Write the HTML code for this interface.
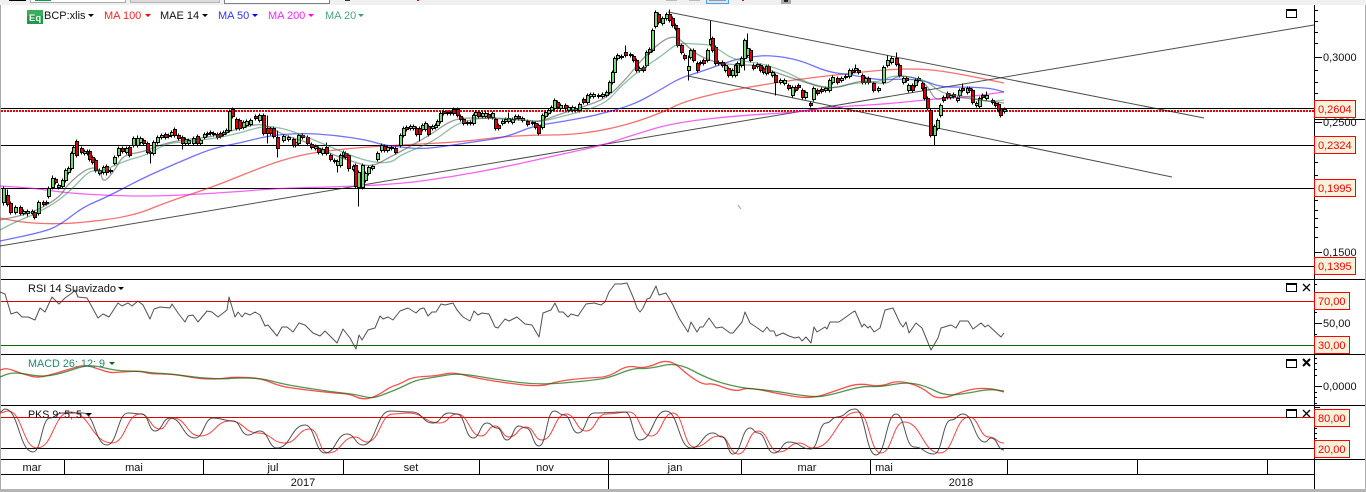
<!DOCTYPE html>
<html><head><meta charset="utf-8"><title>BCP:xlis</title>
<style>
html,body{margin:0;padding:0;background:#fff;width:1366px;height:492px;overflow:hidden}
svg{display:block;font-family:"Liberation Sans",Arial,sans-serif;font-size:11px}
.l{fill:none;stroke-width:1;stroke-linejoin:round}
.m{fill:none;stroke-width:1.3;stroke-linejoin:round}
.k{stroke:#000;stroke-width:1;shape-rendering:crispEdges;fill:none}
.b{fill:#f6f3dd;stroke:#f00;stroke-width:1;shape-rendering:crispEdges}
.r{fill:#f00}
.t{fill:#111}
</style></head><body>
<svg width="1366" height="492" viewBox="0 0 1366 492" xmlns="http://www.w3.org/2000/svg">
<rect width="1366" height="492" fill="#fff"/>
<!-- top strip -->
<rect width="1366" height="5" fill="#f0f0f0"/>
<rect x="9" width="17" height="1" fill="#000"/>
<rect x="30" width="96" height="3" fill="#aaa"/><rect x="31" width="94" height="2" fill="#fff"/><rect x="35" width="16" height="1" fill="#0a9a50"/>
<rect x="130" width="90" height="3" fill="#b5b5b5"/><rect x="131" width="88" height="2" fill="#dcdcdc"/>
<rect x="224" width="106" height="4" fill="#808080"/><rect x="225" width="104" height="3" fill="#fff"/>
<rect x="345" width="5" height="1" fill="#333"/><rect x="417" width="2" height="1" fill="#d00"/>
<rect x="666" width="11" height="1" fill="#bbb"/><rect x="689" width="11" height="1" fill="#bbb"/>
<rect x="706" width="23" height="4" fill="#4aa3f5"/><rect x="707" width="21" height="3" fill="#d8e6f2"/><rect x="709" width="17" height="1" fill="#999"/>
<rect x="742" width="2" height="1" fill="#a22"/><rect x="781" width="10" height="4" fill="#aaa"/><rect x="784" width="4" height="2" fill="#222"/>
<!-- frame -->
<rect x="0" y="5" width="1" height="484" fill="#a8a8a8"/>
<rect x="1365" y="5" width="1" height="487" fill="#b0b0b0"/>
<rect x="0" y="489" width="1366" height="3" fill="#b4b4b4"/>
<!-- horizontal levels -->
<path class="k" d="M1 108.5H1314M1 145.5H1314M1 188.5H1314M1 266.5H1314M1 279.5H1365M1 354.5H1365M1 405.5H1365M1 459.5H1365M1 474.5H1314M1 448.5H1314M1314 119.5H1365"/>
<path d="M1 111H1314" stroke="#e80000" stroke-width="2" stroke-dasharray="2 1" fill="none" shape-rendering="crispEdges"/>
<path d="M1 301.5H1314M1 417.5H1314" stroke="#e00000" fill="none" shape-rendering="crispEdges"/>
<path d="M1 345.5H1314" stroke="#0a6a0a" fill="none" shape-rendering="crispEdges"/>
<!-- axis -->
<path class="k" d="M1314.5 5V489M64.5 459V474M203.5 459V474M343.5 459V474M479.5 459V474M608.5 459V489M741.5 459V474M870.5 459V474M1007.5 459V474M1137.5 459V474M1267.5 459V474"/>
<path class="k" d="M1314 10.5h4M1314 21.5h4M1314 32.5h4M1314 43.5h4M1314 57.5h8M1314 70.5h4M1314 82.5h4M1314 93.5h4M1314 122.5h8M1314 136.5h4M1314 162.5h4M1314 175.5h4M1314 200.5h4M1314 210.5h4M1314 218.5h4M1314 227.5h4M1314 237.5h4M1314 252.5h8M1314 284.5h3M1314 293.5h3M1314 312.5h3M1314 323.5h8M1314 334.5h3M1314 358.5h3M1314 363.5h3M1314 369.5h3M1314 375.5h3M1314 386.5h8M1314 392.5h3M1314 397.5h3M1314 403.5h3M1314 407.5h6M1314 428.5h3M1314 433.5h3M1314 438.5h3"/>
<!-- trend lines -->
<g class="l" stroke="#222" stroke-opacity=".8">
<path d="M0 246L1314 25"/><path d="M668 12L1204 118"/><path d="M688 76L1172 177"/>
</g>
<path d="M738 205l3 4" stroke="#999" fill="none"/>
<!-- moving averages -->
<path class="m" stroke="#f01818" stroke-opacity=".62" d="M0 218L10 220Q20 222 33.5 223Q47 224 63.5 223.5Q80 223 106.5 219.5Q133 216 150 209Q167 202 190 194.5Q213 187 240 176Q267 165 283.5 160Q300 155 316.5 152.5Q333 150 350 148.5Q367 147 383.5 146Q400 145 430 143.5Q460 142 480 139.5Q500 137 516.5 136Q533 135 550 135Q567 135 583.5 133Q600 131 616.5 127Q633 123 648 117.5Q663 112 673 107Q683 102 700 97.5Q717 93 733.5 90Q750 87 765 84.5Q780 82 798.5 79.5Q817 77 835 75Q853 73 873 71Q893 69 910 69Q927 69 943.5 71.5Q960 74 982 78.5L1004 83"/>
<path class="m" stroke="#f010f0" stroke-opacity=".65" d="M0 186L16.5 187Q33 188 50 190.5Q67 193 92 194.5Q117 196 142 196Q167 196 200 194Q233 192 258 190Q283 188 308 187.5Q333 187 366.5 185.5Q400 184 425 180.5Q450 177 475 172.5Q500 168 533.5 160.5Q567 153 583.5 149.5Q600 146 616.5 140.5Q633 135 653 129Q673 123 703 119.5Q733 116 766.5 114Q800 112 816.5 109.5Q833 107 860 105.5Q887 104 910 101.5Q933 99 950 98Q967 97 985.5 94.5L1004 92"/>
<path class="m" stroke="#1a1aff" stroke-opacity=".62" d="M0 241L21.5 236.5Q43 232 51.5 228.5Q60 225 71.5 216Q83 207 95 202Q107 197 125 187.5Q143 178 160 170.5Q177 163 195 155.5Q213 148 226.5 145.5Q240 143 253.5 139.5Q267 136 283.5 134.5Q300 133 316.5 134Q333 135 350 137.5Q367 140 375 142.5Q383 145 391.5 146Q400 147 410 148Q420 149 430 148Q440 147 456.5 144.5Q473 142 490 139.5Q507 137 520 131.5Q533 126 546.5 124Q560 122 573.5 119.5Q587 117 593.5 115.5Q600 114 616.5 109.5Q633 105 646.5 97.5Q660 90 670 84Q680 78 690 75Q700 72 716.5 66Q733 60 741.5 58.5Q750 57 760 56Q770 55 785 57.5Q800 60 813.5 66Q827 72 840 73.5Q853 75 865 77.5Q877 80 888.5 79.5Q900 79 911.5 79.5Q923 80 931.5 83.5Q940 87 951.5 87Q963 87 976.5 87.5Q990 88 997 90L1004 92"/>
<!-- candles -->
<g transform="translate(.5 .5)" shape-rendering="crispEdges">
<path stroke="#000" fill="none" d="M3 186V205M7 189V206M10 201V214M15 205V214M20 205V215M23 209V215M27 209V216M32 209V215M34 210V219M38 200V215M43 200V206M46 200V205M48 186V198M52 175V189M55 177V184M58 183V189M62 178V188M65 168V182M68 166V174M71 151V170M73 145V155M76 139V157M81 146V154M84 149V155M87 149V155M89 149V161M92 155V164M95 158V172M99 168V175M103 165V174M106 164V175M110 168V173M114 155V165M118 146V157M122 146V153M126 146V154M129 145V157M133 136V147M137 135V147M140 136V144M143 138V145M147 141V154M150 150V163M153 140V155M157 135V144M161 133V139M165 132V139M168 133V138M171 130V137M174 127V137M178 133V140M182 135V149M185 137V145M188 138V145M193 136V145M197 134V145M200 138V145M204 132V139M207 131V136M210 130V135M213 131V136M217 132V139M220 131V138M223 130V136M226 128V134M229 109V132M232 107V118M236 117V130M239 118V130M243 120V129M246 119V127M250 118V126M255 114V120M259 113V122M263 113V135M267 115V143M270 126V135M273 126V138M277 130V157M283 134V142M288 135V141M293 137V147M295 140V147M298 133V145M302 133V139M307 135V145M311 142V149M315 144V150M318 146V154M322 147V155M326 142V155M330 153V161M334 158V163M337 159V172M340 153V167M343 150V157M345 151V159M348 153V171M353 164V171M355 163V188M358 170V206M362 163V189M365 171V182M368 165V175M372 164V170M377 151V161M381 143V152M384 144V152M387 145V152M391 145V150M395 146V154M400 133V147M403 126V137M406 125V131M410 124V130M413 124V130M416 126V136M419 126V141M422 123V131M425 121V131M428 124V136M432 124V130M435 123V129M437 119V127M440 111V123M443 109V115M447 110V115M450 110V115M453 107V115M457 107V117M460 114V121M463 117V125M467 120V125M470 120V125M473 113V125M475 110V117M478 110V118M482 111V118M485 111V118M488 112V119M492 111V119M495 117V130M498 123V130M502 119V125M505 117V123M508 112V123M512 117V124M515 114V120M518 114V120M522 116V122M527 119V126M532 120V125M535 121V129M538 123V135M542 113V129M545 110V118M548 108V115M551 105V112M554 98V110M557 100V109M560 103V110M565 103V110M568 105V112M572 105V112M575 106V112M579 102V112M583 97V104M587 93V104M590 92V98M593 92V98M598 93V98M602 92V98M606 90V97M609 80V94M612 70V84M614 56V74M617 53V60M621 54V59M625 45V57M630 52V57M633 54V62M636 58V72M639 66V72M643 65V72M646 50V67M649 47V54M652 28V52M655 10V28M658 12V24M662 16V25M666 12V20M669 9V22M672 16V27M675 23V30M677 26V47M681 43V54M684 53V60M688 55V80M690 48V59M693 48V62M697 61V72M700 60V65M703 58V65M707 48V62M710 20V46M712 36V52M715 45V65M718 60V65M722 60V67M725 63V72M728 66V77M732 68V77M735 63V77M737 61V74M741 56V67M744 38V70M747 33V57M750 48V62M753 63V70M757 62V68M760 63V72M763 66V74M766 64V75M768 64V74M772 70V77M775 73V95M780 78V84M784 78V85M788 83V90M792 85V97M795 85V92M798 83V89M802 88V99M805 90V99M810 101V107M813 86V101M817 88V95M821 87V93M825 86V92M829 78V92M832 75V84M837 76V84M841 76V82M845 74V79M849 68V78M852 68V74M855 64V72M858 68V74M862 73V84M865 76V84M868 76V84M873 81V92M878 86V92M883 65V84M887 55V67M891 56V64M896 52V66M899 63V77M903 76V84M906 76V82M908 83V92M912 83V92M915 78V87M918 76V82M922 81V90M924 85V100M927 96V110M930 108V137M934 124V145M937 118V130M940 103V117M943 95V102M947 91V99M950 93V99M953 92V98M957 96V102M959 88V97M962 83V92M967 86V94M969 86V92M972 88V104M976 101V107M979 96V108M982 93V99M986 91V100M992 98V104M995 101V107M998 102V112M1000 106V117M1004 107V113"/>
<path stroke="#000" fill="#6fdc6f" d="M2 188h3v14h-3zM14 207h3v5h-3zM22 211h3v2h-3zM26 211h3v2h-3zM31 211h3v2h-3zM37 202h3v11h-3zM45 202h3v1h-3zM47 188h3v8h-3zM51 178h3v9h-3zM57 185h3v2h-3zM61 180h3v6h-3zM64 170h3v10h-3zM67 168h3v4h-3zM70 153h3v15h-3zM72 147h3v6h-3zM83 151h3v2h-3zM98 170h3v3h-3zM102 167h3v5h-3zM109 170h3v1h-3zM113 157h3v6h-3zM117 148h3v7h-3zM125 148h3v4h-3zM132 138h3v7h-3zM136 138h3v7h-3zM139 138h3v4h-3zM149 152h3v1h-3zM152 142h3v11h-3zM156 137h3v5h-3zM160 135h3v2h-3zM167 135h3v1h-3zM170 132h3v3h-3zM184 139h3v4h-3zM187 140h3v3h-3zM192 138h3v5h-3zM199 140h3v3h-3zM203 134h3v3h-3zM206 133h3v1h-3zM209 132h3v1h-3zM212 133h3v1h-3zM222 132h3v2h-3zM225 130h3v2h-3zM228 111h3v19h-3zM242 122h3v5h-3zM245 121h3v4h-3zM249 120h3v4h-3zM258 115h3v5h-3zM282 136h3v4h-3zM287 137h3v2h-3zM294 142h3v3h-3zM297 135h3v8h-3zM314 146h3v2h-3zM321 149h3v4h-3zM333 160h3v1h-3zM336 161h3v4h-3zM339 155h3v10h-3zM342 152h3v3h-3zM352 166h3v3h-3zM357 172h3v15h-3zM361 165h3v22h-3zM364 173h3v7h-3zM367 167h3v6h-3zM371 166h3v2h-3zM376 153h3v6h-3zM380 145h3v5h-3zM386 147h3v3h-3zM390 147h3v1h-3zM399 135h3v10h-3zM402 128h3v7h-3zM409 126h3v2h-3zM412 126h3v2h-3zM421 125h3v4h-3zM424 123h3v6h-3zM431 126h3v2h-3zM434 125h3v2h-3zM436 121h3v4h-3zM439 113h3v8h-3zM446 112h3v1h-3zM449 112h3v1h-3zM466 122h3v1h-3zM469 122h3v1h-3zM472 115h3v8h-3zM474 112h3v3h-3zM481 113h3v3h-3zM484 113h3v3h-3zM491 113h3v4h-3zM501 121h3v2h-3zM504 119h3v2h-3zM507 118h3v3h-3zM511 119h3v3h-3zM514 116h3v2h-3zM521 118h3v2h-3zM531 122h3v1h-3zM541 115h3v12h-3zM544 112h3v4h-3zM547 110h3v3h-3zM550 107h3v3h-3zM553 100h3v8h-3zM559 105h3v3h-3zM567 107h3v3h-3zM571 107h3v3h-3zM574 108h3v2h-3zM578 104h3v6h-3zM586 95h3v7h-3zM589 94h3v2h-3zM592 94h3v2h-3zM597 95h3v1h-3zM601 94h3v2h-3zM605 92h3v3h-3zM608 82h3v10h-3zM611 72h3v10h-3zM613 58h3v14h-3zM616 55h3v3h-3zM620 56h3v1h-3zM629 54h3v1h-3zM638 68h3v2h-3zM645 52h3v13h-3zM648 49h3v3h-3zM651 30h3v20h-3zM654 12h3v14h-3zM661 18h3v5h-3zM665 14h3v4h-3zM687 66h3v4h-3zM689 50h3v7h-3zM699 62h3v1h-3zM706 50h3v10h-3zM709 39h3v5h-3zM717 62h3v1h-3zM724 65h3v5h-3zM731 70h3v5h-3zM734 65h3v10h-3zM736 63h3v9h-3zM740 58h3v7h-3zM743 40h3v18h-3zM746 48h3v7h-3zM756 64h3v2h-3zM765 66h3v7h-3zM771 72h3v3h-3zM779 80h3v2h-3zM783 80h3v3h-3zM791 87h3v8h-3zM804 92h3v5h-3zM812 88h3v11h-3zM824 88h3v2h-3zM828 80h3v10h-3zM831 77h3v5h-3zM840 78h3v2h-3zM844 76h3v1h-3zM848 70h3v6h-3zM854 68h3v2h-3zM864 78h3v4h-3zM877 88h3v2h-3zM882 67h3v15h-3zM886 60h3v5h-3zM890 58h3v4h-3zM902 78h3v4h-3zM907 85h3v5h-3zM914 80h3v5h-3zM917 78h3v2h-3zM933 126h3v9h-3zM936 120h3v8h-3zM939 105h3v10h-3zM949 95h3v2h-3zM956 98h3v2h-3zM958 90h3v5h-3zM966 88h3v4h-3zM975 103h3v2h-3zM978 98h3v8h-3zM985 95h3v3h-3zM1003 109h3v2h-3z"/>
<path stroke="#000" fill="#e80000" d="M6 195h3v9h-3zM9 203h3v9h-3zM19 207h3v6h-3zM33 212h3v5h-3zM42 202h3v2h-3zM54 179h3v3h-3zM75 141h3v14h-3zM80 148h3v4h-3zM86 151h3v2h-3zM88 151h3v8h-3zM91 157h3v5h-3zM94 160h3v10h-3zM105 166h3v6h-3zM121 148h3v3h-3zM128 147h3v8h-3zM142 140h3v3h-3zM146 143h3v9h-3zM164 134h3v3h-3zM173 129h3v6h-3zM177 135h3v3h-3zM181 137h3v6h-3zM196 136h3v7h-3zM216 134h3v3h-3zM219 133h3v3h-3zM231 109h3v7h-3zM235 119h3v9h-3zM238 120h3v8h-3zM254 116h3v2h-3zM262 115h3v18h-3zM266 128h3v5h-3zM269 128h3v5h-3zM272 128h3v8h-3zM276 137h3v11h-3zM292 139h3v6h-3zM301 135h3v2h-3zM306 137h3v6h-3zM310 144h3v3h-3zM317 148h3v4h-3zM325 147h3v6h-3zM329 155h3v4h-3zM344 153h3v4h-3zM347 155h3v13h-3zM354 165h3v21h-3zM383 146h3v4h-3zM394 148h3v4h-3zM405 127h3v2h-3zM415 128h3v6h-3zM418 128h3v6h-3zM427 126h3v8h-3zM442 111h3v2h-3zM452 109h3v4h-3zM456 109h3v6h-3zM459 116h3v3h-3zM462 119h3v4h-3zM477 112h3v4h-3zM487 114h3v3h-3zM494 119h3v9h-3zM497 125h3v3h-3zM517 116h3v2h-3zM526 121h3v3h-3zM534 123h3v4h-3zM537 125h3v8h-3zM556 102h3v5h-3zM564 105h3v3h-3zM582 99h3v3h-3zM624 52h3v3h-3zM632 56h3v4h-3zM635 60h3v10h-3zM642 67h3v3h-3zM657 14h3v8h-3zM668 14h3v6h-3zM671 18h3v7h-3zM674 25h3v3h-3zM676 28h3v17h-3zM680 45h3v7h-3zM683 55h3v3h-3zM692 50h3v10h-3zM696 63h3v7h-3zM702 60h3v3h-3zM711 38h3v12h-3zM714 47h3v16h-3zM721 62h3v3h-3zM727 68h3v7h-3zM749 50h3v10h-3zM752 65h3v3h-3zM759 65h3v5h-3zM762 68h3v4h-3zM767 66h3v6h-3zM774 75h3v7h-3zM787 85h3v3h-3zM794 87h3v3h-3zM797 85h3v2h-3zM801 90h3v7h-3zM809 103h3v2h-3zM816 90h3v3h-3zM820 89h3v2h-3zM836 78h3v4h-3zM851 70h3v2h-3zM857 70h3v2h-3zM861 75h3v7h-3zM867 78h3v4h-3zM872 83h3v7h-3zM895 58h3v6h-3zM898 65h3v10h-3zM905 78h3v2h-3zM911 85h3v5h-3zM921 83h3v5h-3zM923 87h3v11h-3zM926 98h3v10h-3zM929 110h3v25h-3zM942 97h3v3h-3zM946 93h3v4h-3zM952 94h3v2h-3zM961 88h3v2h-3zM968 88h3v2h-3zM971 90h3v12h-3zM981 95h3v2h-3zM991 100h3v2h-3zM994 103h3v2h-3zM997 104h3v6h-3zM999 108h3v7h-3z"/>
</g>
<path class="m" stroke="#2e8b57" stroke-opacity=".55" d="M0 230L7.5 226Q15 222 24 218.5Q33 215 45 208.5Q57 202 65 195Q73 188 81.5 179Q90 170 95 171Q100 172 113.5 166Q127 160 137 157.5Q147 155 157 149Q167 143 177 142.5Q187 142 202 140Q217 138 228.5 135.5Q240 133 251.5 129.5Q263 126 273 127Q283 128 295 132.5Q307 137 320 142.5Q333 148 345 153Q357 158 367 160.5Q377 163 385 162.5Q393 162 396.5 158.5Q400 155 416.5 148.5Q433 142 445 132.5Q457 123 468.5 120.5Q480 118 490 118Q500 118 513.5 119Q527 120 533.5 121Q540 122 550 119.5Q560 117 573.5 113.5Q587 110 597 106Q607 102 613.5 94.5Q620 87 630 78.5Q640 70 651.5 62.5Q663 55 670 49Q677 43 687 43.5Q697 44 705 44.5Q713 45 723 52.5Q733 60 746.5 61.5Q760 63 773.5 67.5Q787 72 797 77.5Q807 83 820 86Q833 89 843 86Q853 83 866.5 82.5Q880 82 886.5 78.5Q893 75 905 76.5Q917 78 922.5 80Q928 82 934 87Q940 92 946.5 93.5Q953 95 961.5 96Q970 97 978.5 99.5Q987 102 995.5 101L1004 100"/>
<path class="m" stroke="#333" stroke-opacity=".5" d="M0 220L16.5 216.5Q33 213 46.5 205Q60 197 63.5 191Q67 185 77 176.5Q87 168 93.5 168Q100 168 101.5 176Q103 184 109 177Q115 170 119 162.5Q123 155 133 153.5Q143 152 151.5 148.5Q160 145 170 142.5Q180 140 196.5 138.5Q213 137 226.5 132.5Q240 128 251.5 125.5Q263 123 273 129Q283 135 296.5 139Q310 143 321.5 149Q333 155 345 159Q357 163 364.5 165Q372 167 381 162Q390 157 395 154.5Q400 152 415 143.5Q430 135 438.5 129Q447 123 453.5 120.5Q460 118 473.5 118Q487 118 503.5 119Q520 120 530 121Q540 122 548.5 118.5Q557 115 570 111Q583 107 595 102.5Q607 98 617 88Q627 78 635 68Q643 58 653 49Q663 40 669 38Q675 36 679 39Q683 42 690 48.5Q697 55 707 59Q717 63 727 64Q737 65 747 65Q757 65 767 69Q777 73 792 78Q807 83 817 86Q827 89 837 87Q847 85 855 82.5Q863 80 875 82.5Q887 85 892 80Q897 75 907 76.5Q917 78 922 81.5Q927 85 931 92.5Q935 100 939 99Q943 98 950 97.5Q957 97 968.5 98.5Q980 100 992 101.5L1004 103"/>
<!-- RSI -->
<polyline class="l" stroke="#333" stroke-opacity=".85" points="0,292 5,294 11,314 17,312 22,317 28,317 35,320 40,308 45,312 52,297 59,304 65,298 72,293 75,290 78,297 87,298 92,307 98,318 103,314 109,317 118,303 122,306 128,303 132,306 138,301 143,305 150,319 154,309 160,307 170,308 172,304 178,313 185,322 188,316 193,315 198,322 207,311 212,312 218,317 227,310 229,297 235,317 238,312 242,317 245,313 250,315 255,312 260,315 265,326 268,325 277,336 282,327 287,327 293,332 299,323 305,325 313,333 320,336 325,331 337,343 343,329 350,338 356,349 359,335 362,340 368,330 375,328 380,316 383,319 388,317 393,320 400,311 408,308 416,313 420,309 424,308 428,316 432,312 436,312 441,304 445,305 453,303 457,310 463,317 470,321 474,311 478,315 482,313 489,314 495,327 498,328 505,319 509,321 517,317 525,324 532,325 539,337 543,313 551,310 555,303 559,312 563,312 568,317 571,314 578,316 586,304 594,303 601,305 605,302 609,292 615,284 621,284 627,283 633,297 637,308 640,312 643,308 647,299 650,298 656,286 659,295 666,293 673,305 679,318 688,332 691,322 697,332 700,327 703,327 709,318 716,328 722,327 730,333 733,333 742,322 745,312 750,323 756,327 763,332 767,327 770,331 774,331 776,336 783,333 789,336 795,338 799,337 802,341 806,337 811,343 814,327 817,332 825,327 827,329 830,322 839,322 853,312 855,311 862,327 864,324 868,328 870,326 874,332 880,328 885,310 893,308 900,323 903,327 906,322 909,333 916,323 922,328 931,350 938,338 941,328 951,325 956,328 960,321 968,321 973,329 981,323 985,327 988,325 1001,337 1004,333"/>
<!-- MACD -->
<path class="m" stroke="#f00" stroke-opacity=".7" d="M0 370L3.5 369Q7 368 13.5 370.5Q20 373 28.5 375.5Q37 378 43.5 376.5Q50 375 60 372Q70 369 76.5 367Q83 365 88 366Q93 367 101.5 370Q110 373 115 372.5Q120 372 130 371.5Q140 371 145 372.5Q150 374 161.5 374Q173 374 186.5 376.5Q200 379 210 379Q220 379 226.5 378Q233 377 246.5 377.5Q260 378 268.5 381.5Q277 385 283.5 386.5Q290 388 311.5 390.5Q333 393 341.5 393.5Q350 394 356.5 397Q363 400 370 398Q377 396 383.5 391.5Q390 387 395 385.5Q400 384 406 380.5Q412 377 424 376.5Q436 376 444.5 374Q453 372 462 374.5Q471 377 485 379.5Q499 382 519.5 384.5Q540 387 549 384Q558 381 572 379.5Q586 378 597.5 377.5Q609 377 618 371Q627 365 636 367Q645 369 657 363.5Q669 358 679 367Q689 376 696.5 380.5Q704 385 708 384Q712 383 724 387.5Q736 392 742 389.5Q748 387 763.5 390.5Q779 394 795 396.5Q811 399 823 395Q835 391 846.5 387Q858 383 869 385Q880 387 889 383.5Q898 380 910 383.5Q922 387 930 394Q938 401 953.5 395Q969 389 979 388.5Q989 388 996.5 390L1004 392"/>
<path class="m" stroke="#0a6a0a" stroke-opacity=".7" d="M0 377L5 375Q10 373 15 373Q20 373 31.5 375Q43 377 53 375Q63 373 71.5 370Q80 367 86.5 366Q93 365 105 368Q117 371 128.5 371Q140 371 146.5 372Q153 373 163 373.5Q173 374 186.5 376Q200 378 213.5 378.5Q227 379 230 378.5Q233 378 246.5 378Q260 378 271.5 381Q283 384 291.5 385.5Q300 387 316.5 389.5Q333 392 343 393Q353 394 361.5 396Q370 398 373.5 397.5Q377 397 383.5 394.5Q390 392 395 390Q400 388 408 384Q416 380 426 378.5Q436 377 447.5 375Q459 373 479 376.5Q499 380 519.5 382.5Q540 385 563 383Q586 381 597.5 379.5Q609 378 621 373Q633 368 641 368.5Q649 369 663 365.5Q677 362 692.5 370.5Q708 379 724 383.5Q740 388 754 389Q768 390 789.5 393.5Q811 397 819 396.5Q827 396 844.5 391Q862 386 871 386.5Q880 387 893 384.5Q906 382 916 384Q926 386 935.5 391Q945 396 957 394.5Q969 393 979 391Q989 389 996.5 390L1004 391"/>
<!-- PKS -->
<path class="l" stroke="#f00" stroke-opacity=".75" d="M0 413C4 413 4 411 8 411C22.5 411 22.5 448 37 448C53.5 448 53.5 412 70 412C91 412 91 443 112 443C126 443 126 414 140 414C150 414 150 429 160 429C166.5 429 166.5 418 173 418C186.5 418 186.5 436 200 436C215 436 215 421 230 421C244 421 244 433 258 433C271.5 433 271.5 443 285 443C297.5 443 297.5 429 310 429C319 429 319 453 328 453C341.5 453 341.5 437 355 437C361 437 361 442 367 442C380 442 380 414 393 414C400.5 414 400.5 413 408 413C424 413 424 423 440 423C448.5 423 448.5 414 457 414C469 414 469 436 481 436C488 436 488 426 495 426C502 426 502 437 509 437C517.5 437 517.5 427 526 427C534 427 534 440 542 440C554 440 554 414 566 414C576 414 576 431 586 431C596 431 596 414 606 414C617.5 414 617.5 412 629 412C640 412 640 436 651 436C662 436 662 413 673 413C683.5 413 683.5 447 694 447C707 447 707 436 720 436C729 436 729 454 738 454C748 454 748 431 758 431C768.5 431 768.5 452 779 452C789 452 789 443 799 443C806 443 806 448 813 448C835.5 448 835.5 412 858 412C869.5 412 869.5 453 881 453C892.5 453 892.5 422 904 422C922 422 922 453 940 453C954.5 453 954.5 417 969 417C979 417 979 437 989 437C996.5 437 996.5 443 1004 443"/>
<path class="l" stroke="#333" stroke-opacity=".85" d="M0 412C2.5 412 2.5 409 5 409C19 409 19 452 33 452C41.5 452 41.5 418 50 418C56 418 56 413 62 413C72.5 413 72.5 413 83 413C95 413 95 445 107 445C117.5 445 117.5 413 128 413C135 413 135 414 142 414C148.5 414 148.5 431 155 431C162.5 431 162.5 418 170 418C182.5 418 182.5 438 195 438C204 438 204 418 213 418C223 418 223 421 233 421C240.5 421 240.5 435 248 435C254 435 254 431 260 431C268.5 431 268.5 448 277 448C291 448 291 425 305 425C315 425 315 453 325 453C336 453 336 434 347 434C355 434 355 445 363 445C376.5 445 376.5 411 390 411C401 411 401 412 412 412C422.5 412 422.5 423 433 423C441 423 441 413 449 413C453 413 453 414 457 414C465 414 465 438 473 438C480 438 480 423 487 423C492 423 492 428 497 428C502 428 502 440 507 440C513 440 513 426 519 426C522.5 426 522.5 428 526 428C532.5 428 532.5 446 539 446C546.5 446 546.5 411 554 411C559 411 559 415 564 415C571 415 571 433 578 433C586 433 586 413 594 413C609.5 413 609.5 412 625 412C632.5 412 632.5 440 640 440C653 440 653 411 666 411C678.5 411 678.5 448 691 448C702 448 702 433 713 433C717.5 433 717.5 437 722 437C727.5 437 727.5 454 733 454C741.5 454 741.5 428 750 428C754 428 754 433 758 433C766 433 766 453 774 453C781.5 453 781.5 442 789 442C800 442 800 449 811 449C818.5 449 818.5 423 826 423C831.5 423 831.5 417 837 417C846 417 846 409 855 409C865.5 409 865.5 455 876 455C886 455 886 414 896 414C905 414 905 447 914 447C924 447 924 454 934 454C942.5 454 942.5 420 951 420C957 420 957 414 963 414C974 414 974 442 985 442C988 442 988 438 991 438C997.5 438 997.5 450 1004 450"/>
<!-- legend -->
<rect x="27" y="10" width="16" height="14" fill="#1f9a48"/><rect x="27" y="10" width="16" height="6" fill="#3aae5c"/>
<text x="29" y="21" fill="#fff" font-weight="bold" font-size="9.5">Eq</text>
<text x="44" y="19" class="t">BCP:xlis</text><path d="M88 14h6l-3 3z" fill="#000"/>
<text x="104" y="19" fill="#f22">MA 100</text><path d="M145 14h6l-3 3z" fill="#f00"/>
<text x="160" y="19" class="t">MAE 14</text><path d="M202 14h6l-3 3z" fill="#000"/>
<text x="218" y="19" fill="#33f">MA 50</text><path d="M252 14h6l-3 3z" fill="#00f"/>
<text x="268" y="19" fill="#f2f">MA 200</text><path d="M308 14h6l-3 3z" fill="#f0f"/>
<text x="325" y="19" fill="#4aa58a">MA 20</text><path d="M358 14h6l-3 3z" fill="#3d9a7d"/>
<text x="28" y="292" class="t" textLength="88" lengthAdjust="spacingAndGlyphs">RSI 14 Suavizado</text><path d="M118 287h6l-3 3z" fill="#000"/>
<text x="28" y="367" fill="#1a8a70" textLength="77" lengthAdjust="spacingAndGlyphs">MACD 26; 12; 9</text><path d="M109 362h6l-3 3z" fill="#0a6a0a"/>
<text x="28" y="418" class="t" textLength="54" lengthAdjust="spacingAndGlyphs">PKS 9; 5; 5</text><path d="M86 413h6l-3 3z" fill="#000"/>
<!-- window icons -->
<g fill="none" stroke="#000" shape-rendering="crispEdges">
<path d="M1286.5 9.5h10v8h-10zM1286.5 10.5h10"/>
<path d="M1286.5 283.5h10v8h-10zM1286.5 284.5h10"/>
<path d="M1286.5 359.5h10v8h-10zM1286.5 360.5h10"/>
<path d="M1286.5 409.5h10v8h-10zM1286.5 410.5h10"/>
</g>
<path d="M1303 284l7 7M1310 284l-7 7M1303 410l7 7M1310 410l-7 7" stroke="#000" stroke-width="1.3" fill="none"/>
<path d="M1303 359l7 7M1310 359l-7 7" stroke="#000" stroke-width="2" fill="none"/>
<!-- axis text -->
<g class="t">
<text x="1323" y="61">0,3000</text><text x="1323" y="126">0,2500</text><text x="1323" y="256">0,1500</text>
<text x="1323" y="327">50,00</text><text x="1323" y="390">0,0000</text>
</g>
<!-- price labels -->
<g>
<rect class="b" x="1314.5" y="100.5" width="41" height="17"/><rect class="b" x="1314.5" y="136.5" width="41" height="17"/><rect class="b" x="1314.5" y="179.5" width="41" height="17"/><rect class="b" x="1314.5" y="257.5" width="41" height="17"/>
<rect class="b" x="1314.5" y="292.5" width="35" height="17"/><rect class="b" x="1314.5" y="336.5" width="35" height="17"/><rect class="b" x="1314.5" y="409.5" width="35" height="17"/><rect class="b" x="1314.5" y="440.5" width="35" height="17"/>
</g>
<g class="r">
<text x="1318" y="113">0,2604</text><text x="1318" y="149">0,2324</text><text x="1318" y="192">0,1995</text><text x="1318" y="270">0,1395</text>
<text x="1318" y="305">70,00</text><text x="1318" y="349">30,00</text><text x="1318" y="422">80,00</text><text x="1318" y="453">20,00</text>
</g>
<!-- date labels -->
<g class="t" text-anchor="middle">
<text x="32" y="471">mar</text><text x="134" y="471">mai</text><text x="273" y="471">jul</text><text x="411" y="471">set</text><text x="545" y="471">nov</text><text x="675" y="471">jan</text><text x="807" y="471">mar</text><text x="884" y="471">mai</text>
<text x="303" y="486">2017</text><text x="961" y="486">2018</text>
</g>
</svg>
</body></html>
